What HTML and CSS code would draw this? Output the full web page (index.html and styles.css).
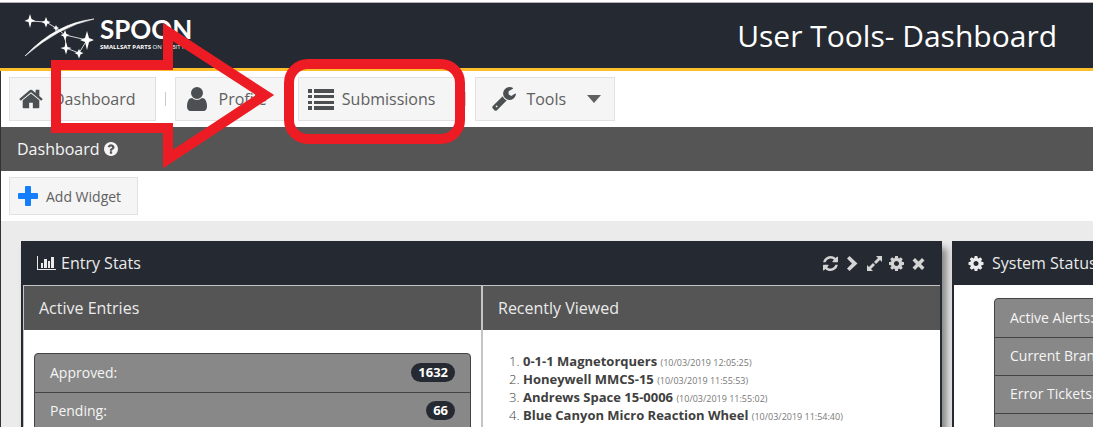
FILE: index.html
```html
<!DOCTYPE html>
<html lang="en">
<head>
<meta charset="utf-8">
<title>User Tools - Dashboard</title>
<link rel="stylesheet" href="styles.css">
</head>
<body>
<svg class="defs" aria-hidden="true">
  <symbol id="cog" viewBox="0 0 1792 1792"><path d="M1152 896q0-106-75-181t-181-75-181 75-75 181 75 181 181 75 181-75 75-181zm512-109v222q0 12-8 23t-20 13l-185 28q-19 54-39 91 35 50 107 138 10 12 10 25t-9 23q-27 37-99 108t-94 71q-12 0-26-9l-138-108q-44 23-91 38-16 136-29 186-7 28-36 28h-222q-14 0-24.500-8.500t-11.500-21.500l-28-184q-49-16-90-37l-141 107q-10 9-25 9-14 0-25-11-126-114-165-168-7-10-7-23 0-12 8-23 15-21 51-66.500t54-70.500q-27-50-41-99l-183-27q-13-2-21-12.500t-8-23.500v-222q0-12 8-23t19-13l186-28q14-46 39-92-40-57-107-138-10-12-10-24 0-10 9-23 26-36 98.500-107.500t94.500-71.500q13 0 26 10l138 107q44-23 91-38 16-136 29-186 7-28 36-28h222q14 0 24.500 8.500t11.500 21.500l28 184q49 16 90 37l142-107q9-9 24-9 13 0 25 10 129 119 165 170 7 8 7 22 0 12-8 23-15 21-51 66.500t-54 70.500q26 50 41 98l183 28q13 2 21 12.500t8 23.500z"/></symbol>
  <symbol id="refresh" viewBox="0 0 1792 1792"><path d="M1639 1056q0 5-1 7-64 268-268 434.500t-478 166.500q-146 0-282.500-55t-243.500-157l-129 129q-19 19-45 19t-45-19-19-45v-448q0-26 19-45t45-19h448q26 0 45 19t19 45-19 45l-137 137q71 66 161 102t187 36q134 0 250-65t186-179q11-17 53-117 8-23 30-23h192q13 0 22.500 9.500t9.500 22.500zm25-800v448q0 26-19 45t-45 19h-448q-26 0-45-19t-19-45 19-45l138-138q-148-137-349-137-134 0-250 65t-186 179q-11 17-53 117-8 23-30 23h-199q-13 0-22.500-9.500t-9.500-22.500v-7q65-268 270-434.500t480-166.500q146 0 284 55.500t245 156.500l130-129q19-19 45-19t45 19 19 45z"/></symbol>
</svg>
<div class="page">
  <header class="banner">
    <div class="logo">
      <svg class="stars" viewBox="0 0 72 46" aria-hidden="true">
        <path d="M1 43Q32 10 70 6Q36 13 1 43z" fill="#fff" stroke="#fff" stroke-width=".6"/>
        <path d="M6 8L22 9 32 15 41 22 63 27 55 40 42 35 41 22" fill="none" stroke="#fff" stroke-width=".8"/>
        <g fill="#fff">
          <path d="M6 1l1.500 5 4 2-4 1-1.500 6-1.500-6-4-1 4-2z"/>
          <path d="M22 4l1.500 4 3 1-3 1.500-1.500 4-1.500-4-3-1.500 3-1z"/>
          <path d="M32 12l1 2 2 1-2 1-1 3-1-3-2-1 2-1z"/>
          <path d="M41 17l1.500 4 3 1-3 1.500-1.500 4-1.500-4-3-1.500 3-1z"/>
          <path d="M63 18l2 7 5 2-5 2-2 8-2-8-5-2 5-2z"/>
          <path d="M42 29l1.500 5 4 1-4 1.500-1.500 5-1.500-5-4-1.500 4-1z"/>
          <path d="M55 36l1.500 3 3 1-3 1.500-1.500 4-1.500-4-3-1.500 3-1z"/>
        </g>
      </svg>
      <div class="wordmark">
        <div class="name">SPOON</div>
        <div class="tagline"><b>SMALLSAT PARTS</b> ON ORBIT NOW</div>
      </div>
    </div>
    <h1>User Tools- Dashboard</h1>
  </header>

  <nav class="toolbar">
    <button class="tool"><svg class="icon" viewBox="64 200 1664 1400"><path d="M1472 992v480q0 26-19 45t-45 19h-384v-384h-256v384h-384q-26 0-45-19t-19-45v-480q0-1 .5-3t.5-3l575-474 575 474q1 2 1 6zm223-69l-62 74q-8 9-21 11h-3q-13 0-21-7l-692-577-692 577q-12 8-24 7-13-2-21-11l-62-74q-8-10-7-23.500t11-21.500l719-599q32-26 76-26t76 26l244 204v-195q0-14 9-23t23-9h192q14 0 23 9t9 23v408l219 182q10 8 11 21.500t-7 23.500z"/></svg><span>Dashboard</span></button>
    <span class="sep"></span>
    <button class="tool"><svg class="icon" viewBox="128 128 1536 1536"><path d="M1536 1399q0 109-62.500 187t-150.500 78h-854q-88 0-150.500-78t-62.500-187q0-85 8.500-160.500t31.500-152 58.500-131 94-89 134.500-34.500q131 128 313 128t313-128q76 0 134.500 34.500t94 89 58.500 131 31.500 152 8.500 160.500zm-256-887q0 159-112.500 271.500t-271.500 112.500-271.500-112.500-112.500-271.500 112.500-271.500 271.500-112.500 271.500 112.500 112.500 271.500z"/></svg><span>Profile</span></button>
    <span class="sep tight"></span>
    <button class="tool list"><svg class="icon wide" viewBox="0 0 26 21"><path d="M0 0h4v4H0zM6 0h20v4H6zM0 6h4v3H0zM6 6h20v3H6zM0 12h4v3H0zM6 12h20v3H6zM0 17h4v4H0zM6 17h20v4H6z"/></svg><span>Submissions</span></button>
    <span class="sep"></span>
    <button class="tool menu"><svg class="icon" viewBox="64 128 1664 1664"><path d="M448 1472q0-26-19-45t-45-19-45 19-19 45 19 45 45 19 45-19 19-45zm644-420l-682 682q-37 37-90 37-52 0-91-37l-106-108q-38-36-38-90 0-53 38-91l681-681q39 98 114.500 173.500t173.500 114.500zm634-435q0 39-23 106-47 134-164.500 217.500t-258.500 83.500q-185 0-316.500-131.500t-131.500-316.500 131.500-316.500 316.500-131.500q58 0 121.500 16.500t107.500 46.500q16 11 16 28t-16 28l-293 169v224l193 107q5-3 79-48.500t135.500-81 70.500-35.500q15 0 23.500 10t8.500 25z"/></svg><span>Tools</span><svg class="caret" viewBox="0 0 14 8"><path d="M0 0h14l-7 8z"/></svg></button>
  </nav>

  <div class="titlebar">
    <h2>Dashboard</h2>
    <svg class="help" viewBox="128 128 1536 1536"><path d="M1024 1376v-192q0-14-9-23t-23-9h-192q-14 0-23 9t-9 23v192q0 14 9 23t23 9h192q14 0 23-9t9-23zm256-672q0-88-55.500-163t-138.500-116-170-41q-243 0-371 213-15 24 8 42l132 100q7 6 19 6 16 0 25-12 53-68 86-92 34-24 86-24 48 0 85.500 26t37.500 59q0 38-20 61t-68 45q-63 28-115.500 86.500t-52.500 125.500v36q0 14 9 23t23 9h192q14 0 23-9t9-23q0-19 21.500-49.500t54.500-49.500q32-18 49-28.500t46-35 44.500-48 28-60.500 12.500-81zm384 192q0 209-103 385.500t-279.500 279.500-385.500 103-385.500-103-279.500-279.500-103-385.500 103-385.500 279.500-279.500 385.500-103 385.500 103 279.500 279.500 103 385.500z"/></svg>
  </div>

  <div class="actions">
    <button class="add"><svg class="plus" viewBox="0 0 20 20"><path d="M7 1q0-1 1-1h4q1 0 1 1v6h6q1 0 1 1v4q0 1-1 1h-6v6q0 1-1 1H8q-1 0-1-1v-6H1q-1 0-1-1V8q0-1 1-1h6z"/></svg><span>Add Widget</span></button>
  </div>

  <main class="board">
    <section class="widget stats">
      <header class="widget-head">
        <svg class="chart" viewBox="0 0 20 16"><path d="M0 1h1v13h18v1H0zM4 8h2v5H4zM7 4h3v9H7zM11 6h2v7h-2zM14 2h3v11h-3z"/></svg>
        <h3>Entry Stats</h3>
        <div class="tools">
          <button aria-label="Refresh"><svg viewBox="128 128 1536 1536"><use href="#refresh" width="1792" height="1792"/></svg></button>
          <button aria-label="Next"><svg viewBox="0 0 15 15"><path d="M2 2.500l2.500-2.500 8 7.500-8 7.500L2 12.500l5-5z"/></svg></button>
          <button aria-label="Expand"><svg viewBox="0 0 15 15"><path d="M9 0h6v6l-2-2-4 4-2-2 4-4zM6 15H0V9l2 2 4-4 2 2-4 4z"/></svg></button>
          <button aria-label="Settings"><svg viewBox="128 128 1536 1536"><use href="#cog" width="1792" height="1792"/></svg></button>
          <button aria-label="Close"><svg viewBox="0 0 15 15"><path d="M4 2l3.500 3.500L11 2l2.500 2.500L10 8l3.500 3.500L11 14l-3.500-3.500L4 14l-2.500-2.500L5 8 1.500 4.500z"/></svg></button>
        </div>
      </header>
      <div class="columns">
        <div class="column">
          <h4>Active Entries</h4>
          <ul class="counts">
            <li>Approved:<span class="badge">1632</span></li>
            <li>Pending:<span class="badge">66</span></li>
          </ul>
        </div>
        <div class="column">
          <h4>Recently Viewed</h4>
          <ol class="recent">
            <li><b>0-1-1 Magnetorquers</b> <small>(10/03/2019 12:05:25)</small></li>
            <li><b>Honeywell MMCS-15</b> <small>(10/03/2019 11:55:53)</small></li>
            <li><b>Andrews Space 15-0006</b> <small>(10/03/2019 11:55:02)</small></li>
            <li><b>Blue Canyon Micro Reaction Wheel</b> <small>(10/03/2019 11:54:40)</small></li>
          </ol>
        </div>
      </div>
    </section>
    <section class="widget status">
      <header class="widget-head">
        <svg class="gear" viewBox="128 128 1536 1536"><use href="#cog" width="1792" height="1792"/></svg>
        <h3>System Status</h3>
      </header>
      <ul class="counts">
        <li>Active Alerts:</li>
        <li>Current Branding:</li>
        <li>Error Tickets:</li>
        <li></li>
      </ul>
    </section>
  </main>

  <svg class="arrow" viewBox="0 0 230 150" aria-hidden="true"><path d="M11 47H123V14L220 77 123 141V110H11z"/></svg>
  <div class="highlight"></div>
</div>
</body>
</html>
```
FILE: styles.css
```css
* { box-sizing: border-box; }
body {
  margin: 0;
  font-family: "Open Sans", sans-serif;
  color: #ebebeb;
  background: #fff;
}
h1, h2, h3, h4, ul, ol { margin: 0; padding: 0; font-weight: 400; }
button { font: inherit; margin: 0; cursor: pointer; }
svg { display: block; fill: currentColor; flex: none; }
.defs { position: absolute; width: 0; height: 0; }

.page {
  position: relative;
  display: flex;
  flex-direction: column;
  height: 100vh;
  padding-top: 2px;
  overflow: hidden;
}
.banner {
  display: flex;
  flex: none;
  justify-content: space-between;
  align-items: center;
  height: 69px;
  padding: 0 36px 0 24px;
  background: #252931;
  border-top: 1px solid #b5b0b8;
  border-bottom: 3px solid #fcc02a;
}
.logo { display: flex; gap: 4px; color: #fff; }
.stars { width: 72px; height: 46px; }
.wordmark { padding-top: 3px; }
.name { font: 700 26px/26px Lato, sans-serif; }
.tagline { font: 6px/10px "Open Sans", sans-serif; white-space: nowrap; }
h1 { color: #fff; font: 400 30px/40px "Open Sans", sans-serif; }

.toolbar, .titlebar, .actions, .board { border-left: 1px solid #333238; }
.toolbar {
  display: flex;
  flex: none;
  align-items: center;
  height: 56px;
  padding-left: 8px;
}
.tool, .add {
  display: flex;
  align-items: center;
  color: #606060;
  background: #f5f5f5;
  border: 1px solid #e1e1e1;
}
.tool { height: 44px; gap: 10px; padding: 0 19px 0 9px; font-size: 16px; }
.icon { width: 24px; height: 24px; color: #4c5052; }
.list { gap: 8px; padding-right: 20px; }
.wide { width: 26px; height: 21px; }
.menu { padding: 0 13px 0 16px; }
.caret { width: 14px; height: 8px; margin-left: 11px; }
.sep { width: 1px; height: 14px; margin: 0 9px; background: #ccc; }
.tight { margin: 0 5px; }

.titlebar {
  display: flex;
  flex: none;
  align-items: center;
  gap: 4px;
  height: 44px;
  padding-left: 16px;
  color: #f5f5f5;
  background: #555;
}
h2, h3, h4 { font-size: 16px; line-height: 24px; }
.help { width: 14px; height: 14px; }

.actions { display: flex; flex: none; align-items: center; height: 50px; padding-left: 8px; }
.add { height: 38px; gap: 8px; padding: 0 16px 0 8px; font-size: 14px; }
.plus { width: 20px; height: 20px; color: #157efb; }

.board {
  display: flex;
  flex: 1;
  gap: 10px;
  padding: 20px 0 0 20px;
  background: #ebebeb;
}
.widget {
  display: flex;
  flex-direction: column;
  background: #fff;
  border: 2px solid #252931;
  border-width: 0 2px;
  box-shadow: 5px 7px 7px #888;
}
.stats { flex: 0 0 calc(100% - 151px); }
.status { flex: 1 0 240px; }
.widget-head {
  display: flex;
  flex: none;
  align-items: center;
  height: 44px;
  padding: 0 14px;
  background: #252931;
}
.chart { width: 20px; height: 16px; margin-right: 4px; }
.gear { width: 16px; height: 15px; margin-right: 8px; }
.tools { display: flex; gap: 7px; margin-left: auto; }
.tools button { padding: 0; border: 0; background: none; color: #d4d4d4; }
.tools svg { width: 15px; height: 15px; }

.columns { display: flex; flex: 1; border-left: 1px solid #c4c4c4; border-top: 1px solid #c4c4c4; }
.column { flex: 1; }
.column + .column { border-left: 2px solid #c4c4c4; }
h4 { padding: 10px 15px; background: #555; }
.counts {
  margin: 23px 10px;
  list-style: none;
  background: #888;
  border: 1px solid #444;
  border-radius: 4px;
  color: #f5f5f5;
  font-size: 14px;
}
.counts li { display: flex; justify-content: space-between; align-items: center; height: 38px; padding: 0 15px 2px; }
.counts li + li { border-top: 1px solid #444; }
.badge {
  padding: 0 7px;
  color: #fff;
  background: #252931;
  border-radius: 10px;
  font-weight: 700;
  font-size: 13px;
  line-height: 19px;
}
.recent { margin: 22px 0 0 40px; color: #404040; font-size: 13px; line-height: 18px; }
.recent li::marker { font-weight: 300; }
.recent small { color: #777; font-size: 9px; font-weight: 400; line-height: 9px; }
.status .counts { margin: 13px 40px; white-space: nowrap; }

.arrow { position: absolute; left: 45px; top: 18px; width: 230px; height: 150px; }
.arrow path { fill: none; stroke: #ed1c24; stroke-width: 10; stroke-miterlimit: 10; }
.highlight {
  position: absolute;
  left: 284px;
  top: 59px;
  width: 181px;
  height: 85px;
  border: 10px solid #ed1c24;
  border-radius: 24px;
}
```
